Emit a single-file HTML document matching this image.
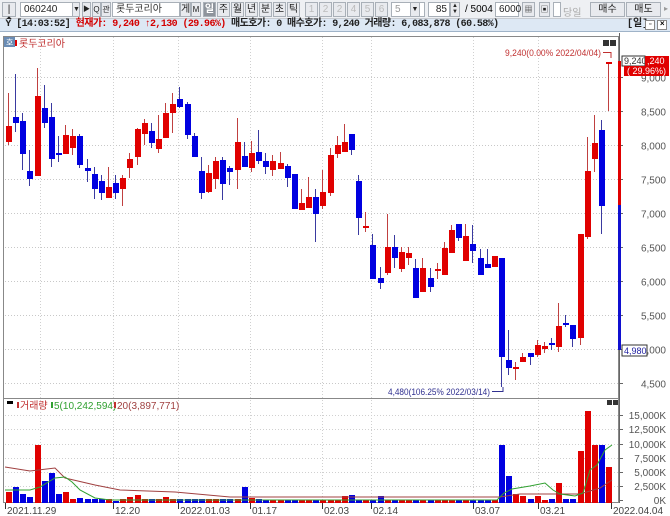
<!DOCTYPE html>
<html><head><meta charset="utf-8">
<style>
*{margin:0;padding:0;box-sizing:border-box}
body{width:670px;height:516px;overflow:hidden;background:#fff;font-family:"Liberation Sans","Noto Sans CJK KR",sans-serif;font-size:10px;position:relative}
.tb{position:absolute;left:0;top:0;width:670px;height:19px;background:#eef0f3;border-bottom:1px solid #c8ccd2}
.b{position:absolute;top:2px;height:15px;border:1px solid #a9b0b8;background:#fff;font-size:10px;line-height:13px;padding-left:3px;color:#222}
.g{background:#e8eaee;text-align:center;padding:0}
.st{position:absolute;left:0;top:19px;width:670px;height:13px;background:#dde8f4;border-bottom:1px solid #9fb3c8;font-size:10px;font-weight:bold;line-height:12px;white-space:nowrap;font-family:"Liberation Mono","Noto Sans CJK KR",monospace;letter-spacing:-0.6px}
svg{position:absolute;left:0;top:0}
</style></head><body>
<div class="tb">
<div class="b g" style="left:2px;width:14px">|◆</div>
<div class="b" style="left:20px;width:58px">060240</div>
<div class="b g" style="left:72px;width:8px;font-size:7px">▼</div>
<div class="b g" style="left:82px;width:9px;font-size:7px">▶</div>
<div class="b g" style="left:92px;width:9px;font-size:8px">Q</div>
<div class="b g" style="left:101px;width:10px;font-size:8px">관</div>
<div class="b" style="left:112px;width:68px;color:#333">롯두코리아</div>
<div class="b g" style="left:180px;width:11px">게</div>
<div class="b g" style="left:191px;width:10px;font-size:8px">M</div>
<div class="b g" style="left:203px;width:13px;background:#8e949c;color:#fff;font-weight:bold">일</div>
<div class="b g" style="left:217px;width:13px">주</div>
<div class="b g" style="left:231px;width:13px">월</div>
<div class="b g" style="left:245px;width:13px">년</div>
<div class="b g" style="left:259px;width:13px">분</div>
<div class="b g" style="left:273px;width:13px">초</div>
<div class="b g" style="left:287px;width:13px">틱</div>
<div class="b g" style="left:305px;width:13px;color:#bbb">1</div>
<div class="b g" style="left:319px;width:13px;color:#bbb">2</div>
<div class="b g" style="left:333px;width:13px;color:#bbb">2</div>
<div class="b g" style="left:347px;width:13px;color:#bbb">4</div>
<div class="b g" style="left:361px;width:13px;color:#bbb">5</div>
<div class="b g" style="left:375px;width:13px;color:#bbb">6</div>
<div class="b" style="left:391px;width:34px;color:#999">5</div>
<div class="b g" style="left:410px;width:10px;font-size:7px">▼</div>
<div class="b" style="left:428px;width:22px;text-align:right;padding-right:2px">85</div>
<div class="b g" style="left:450px;width:10px;font-size:6px;line-height:6px">▲<br>▼</div>
<div style="position:absolute;left:465px;top:4px;font-size:10px">/ 5004</div>
<div class="b" style="left:495px;width:24px">6000</div>
<div class="b g" style="left:522px;width:13px;font-size:8px">▦</div>
<div class="b g" style="left:539px;width:11px;font-size:8px">▣</div>
<div class="b" style="left:553px;width:8px"></div>
<div style="position:absolute;left:563px;top:4px;color:#aaa">당일</div>
<div class="b g" style="left:590px;width:35px">매수</div>
<div class="b g" style="left:626px;width:35px">매도</div>
<div style="position:absolute;left:664px;top:4px;color:#999;font-size:8px">▸</div>
</div>
<div class="st"><span style="color:#222">&nbsp;Y [14:03:52] </span><span style="color:#d40000">현재가: 9,240 ↑2,130 (29.96%)</span><span style="color:#222"> 매도호가: 0 매수호가: 9,240 거래량: 6,083,878 (60.58%)</span><span style="position:absolute;left:627px;color:#222;letter-spacing:0">[일]</span><span style="position:absolute;left:645px;top:1px;width:10px;height:10px;border:1px solid #888;background:#fff;font-size:7px;line-height:8px;text-align:center">▫</span><span style="position:absolute;left:657px;top:1px;width:10px;height:10px;border:1px solid #888;background:#fff;font-size:8px;line-height:8px;text-align:center">×</span></div>
<svg id="s" width="670" height="516" style="top:0" xmlns="http://www.w3.org/2000/svg"></svg>
<script>
var C=[
['r',93,126,142,145],['b',74,117,123,132],['b',113,121,154,170],['b',150,171,179,186],['r',68,96,176,176],['b',85,108,123,128],['b',103,117,159,167],['b',136,153,155,162],['r',125,135,154,154],['r',129,136,148,155],
['b',134,136,165,168],['b',159,168,171,182],['b',167,174,189,199],['b',175,181,193,200],['r',167,187,198,198],['b',175,183,193,199],['r',175,178,189,206],['r',153,159,168,178],['r',128,129,157,165],['r',119,123,134,145],
['b',123,131,143,148],['r',115,139,149,153],['r',103,113,138,138],['r',93,104,113,133],['b',87,99,107,108],['b',102,104,135,139],['b',133,136,157,157],['b',157,171,193,199],['r',165,173,192,193],['r',157,161,179,189],
['b',157,160,184,200],['b',166,168,172,185],['r',118,142,170,189],['b',142,156,167,167],['r',141,153,168,172],['b',130,152,161,164],['b',153,161,167,174],['r',155,161,170,176],['r',152,163,169,169],['b',164,166,178,187],
['b',174,174,209,209],['r',189,203,210,210],['r',177,197,208,208],['b',189,197,214,242],['r',170,192,206,209],['r',148,155,193,196],['r',136,145,154,158],['r',124,142,152,152],['b',134,134,150,155],['b',175,181,218,235],
['r',212,226,228,232],['b',234,245,279,279],['b',267,278,283,289],['r',214,247,273,275],['b',235,247,258,268],['r',247,252,269,272],['r',247,253,258,265],['b',259,268,298,298],['r',258,268,292,292],['b',268,278,287,292],
['r',263,269,271,279],['r',242,248,275,275],['r',225,230,253,253],['b',224,224,238,241],['r',224,236,261,261],['b',225,244,251,263],['b',249,258,275,275],['b',249,264,268,268],['r',256,256,267,267],['b',258,258,357,387],
['b',330,360,368,375],['r',362,367,369,380],['r',353,357,362,362],['b',353,353,357,365],['r',340,345,355,357],['r',342,346,349,353],['b',338,343,345,350],['r',303,326,347,352],['b',315,323,325,327],['b',325,325,339,347],
['r',234,234,338,345],['r',137,171,237,239],['r',115,143,159,172],['b',120,130,206,234],['r',62,62,64,111]];
var V=[492,487,494,497,445,481,473,494,492,499,498,499,499,499,499,501,499,497,495,499,499,499,497,499,499,499,499,499,499,499,499,499,499,487,498,499,500,500,500,500,500,500,500,500,500,500,500,496,495,500,500,500,496,500,500,500,500,500,500,500,500,500,500,500,500,500,500,500,500,445,476,494,496,499,496,500,499,483,499,499,451,411,445,445,467];
var s='';
function L(x1,y1,x2,y2,c,d){return '<line x1="'+x1+'" y1="'+y1+'" x2="'+x2+'" y2="'+y2+'" stroke="'+c+'" stroke-width="1"'+(d?' stroke-dasharray="1,2"':'')+'/>';}
function T(x,y,t,c,a,fs,tl){return '<text x="'+x+'" y="'+y+'" fill="'+c+'" font-size="'+(fs||10)+'"'+(a?' text-anchor="'+a+'"':'')+(tl?' textLength="'+tl+'" lengthAdjust="spacingAndGlyphs"':'')+'>'+t+'</text>';}
s+='<rect x="3.5" y="36.5" width="615" height="466" fill="#fff" stroke="#888"/>';
s+=L(619.5,33,619.5,503,'#666');
s+=L(3,398.5,619,398.5,'#888');
var P=[9000,8500,8000,7500,7000,6500,6000,5500,5000,4500];
P.forEach(function(p){var y=Math.round(77+(9000-p)*0.068)+0.5;s+=L(5,y,618,y,'#c8c8c8',1);s+=L(619,y,623,y,'#666');s+=T(666,y+4,p.toLocaleString('en-US'),'#555','end');});
var VX=[40,113,178,250,322,371,473,538];
VX.forEach(function(x){s+=L(x+0.5,37,x+0.5,502,'#d0d0d0',1);});
[415,429,444,458,472,486].forEach(function(y){s+=L(5,y+0.5,618,y+0.5,'#d0d0d0',1);});
var VL=['15,000K','12,500K','10,000K','7,500K','5,000K','2,500K','0K'];
[415,429,444,458,472,486,500].forEach(function(y,i){s+=L(619,y+0.5,623,y+0.5,'#666');s+=T(666,y+4,VL[i],'#555','end');});
C.forEach(function(c,i){var x=Math.round(8+i*7.145);var col=c[0]=='r'?'#e00000':'#0000e0';var wc=c[0]=='r'?'#c04040':'#3a3aa0';
s+=L(x+0.5,c[1],x+0.5,c[4],wc);var h=Math.max(2,c[3]-c[2]);s+='<rect x="'+(x-2)+'" y="'+c[2]+'" width="6" height="'+h+'" fill="'+col+'"/>';
var v=V[i];s+='<rect x="'+(x-2)+'" y="'+v+'" width="6" height="'+(503-v)+'" fill="'+col+'"/>';});
s+='<polyline fill="none" stroke="#a04040" stroke-width="1" points="5,467 30,471 55,468 65,478 95,485 120,490 175,492 230,497 500,497 520,494 580,494 600,488 612,480"/>';
s+='<polyline fill="none" stroke="#30a030" stroke-width="1" points="5,490 30,490 40,487 55,478 65,477 72,482 80,490 95,498 110,500 497,500 504,493 512,489 530,486 545,483 553,490 560,494 575,496 583,493 590,470 597,465 605,450 612,445"/>';
s+='<rect x="618" y="61" width="3" height="144" fill="#e00000"/><rect x="618" y="205" width="3" height="145" fill="#1010d0"/>';
s+='<rect x="622" y="56" width="23" height="10" fill="#fff" stroke="#333"/>'+T(624,64,'9,240','#333',0,9);
s+='<rect x="645" y="56" width="24" height="10" fill="#e00000"/>'+T(647,64,',240','#fff',0,9);
s+='<rect x="624" y="66" width="45" height="10" fill="#e00000"/>'+T(627,74,'( 29.96%)','#fff',0,9);
s+='<rect x="622" y="345" width="25" height="11" fill="#fff" stroke="#333"/>'+T(624,354,'4,980','#2020a0',0,9);
s+=T(505,56,'9,240(0.00% 2022/04/04)','#c03030',0,9,96)+L(603,52.5,611,52.5,'#c03030')+L(611,52,611,58,'#c03030');
s+=T(388,395,'4,480(106.25% 2022/03/14)','#303090',0,9,102)+L(492,391.5,503,391.5,'#303090')+L(503,387,503,392,'#303090');
s+='<rect x="4" y="37" width="11" height="10" fill="#6a8cb4"/>'+T(6,45,'호','#fff',0,8);
s+='<rect x="15" y="40" width="2" height="6" fill="#d00"/>'+T(19,47,'롯두코리아','#c03030',0,10);
s+='<rect x="603" y="40" width="6" height="6" fill="#333"/><rect x="610" y="40" width="6" height="6" fill="#333"/>';
s+='<rect x="607" y="400" width="5" height="5" fill="#333"/><rect x="613" y="400" width="5" height="5" fill="#333"/>';
s+='<rect x="7" y="401" width="6" height="3" fill="#000"/><rect x="17" y="402" width="2" height="6" fill="#c03030"/>'+T(20,409,'거래량','#c03030',0,10);
s+='<rect x="51" y="402" width="2" height="6" fill="#30a030"/>'+T(54,409,'5(10,242,594)','#30a030',0,10);
s+='<rect x="114" y="402" width="2" height="6" fill="#c03030"/>'+T(117,409,'20(3,897,771)','#a04040',0,10);
var D=[[5,'2021.11.29'],[113,'12.20'],[178,'2022.01.03'],[250,'01.17'],[322,'02.03'],[371,'02.14'],[473,'03.07'],[538,'03.21'],[611,'2022.04.04']];
D.forEach(function(d){s+=L(d[0]+0.5,503,d[0]+0.5,509,'#333');s+=T(d[0]+2,514,d[1],'#444',0,10);});
document.getElementById('s').innerHTML=s;
</script>
</body></html>
